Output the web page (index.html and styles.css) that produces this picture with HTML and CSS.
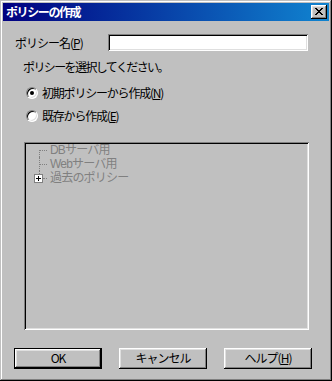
FILE: index.html
```html
<!DOCTYPE html>
<html lang="ja">
<head>
<meta charset="utf-8">
<link rel="stylesheet" href="styles.css">
</head>
<body>
<div class="window">
  <div class="titlebar">
    <span class="title">ポリシーの作成</span>
    <span class="close">
      <svg width="8" height="7" viewBox="0 0 8 7" shape-rendering="crispEdges">
        <path d="M0 0h2v1h-2zM6 0h2v1h-2zM1 1h2v1h-2zM5 1h2v1h-2zM2 2h4v1h-4zM3 3h2v1h-2zM2 4h4v1h-4zM1 5h2v1h-2zM5 5h2v1h-2zM0 6h2v1h-2zM6 6h2v1h-2z" fill="#000"/>
      </svg>
    </span>
  </div>
  <div class="content">
    <div class="name-row">
      <span class="label">ポリシー名(<u>P</u>)</span>
      <span class="input"></span>
    </div>
    <div class="prompt">ポリシーを選択してください。</div>
    <div class="radio-row first">
      <span class="radio checked"><span class="dot"></span></span>
      <span class="rlabel">初期ポリシーから作成(<u>N</u>)</span>
    </div>
    <div class="radio-row">
      <span class="radio"></span>
      <span class="rlabel">既存から作成(<u>E</u>)</span>
    </div>
    <div class="tree">
      <div class="node first">DBサーバ用</div>
      <div class="node">Webサーバ用</div>
      <div class="node last"><span class="plus"></span>過去のポリシー</div>
    </div>
    <div class="buttons">
      <span class="btn default"><span class="btn-face">OK</span></span>
      <span class="btn"><span class="btn-face">キャンセル</span></span>
      <span class="btn"><span class="btn-face">ヘルプ(<u>H</u>)</span></span>
    </div>
  </div>
</div>
</body>
</html>
```
FILE: styles.css
```css
html, body {
  margin: 0;
  padding: 0;
  background: #c0c0c0;
}
body {
  font-family: "Noto Sans CJK JP", "Liberation Sans", sans-serif;
  font-size: 12px;
  color: #000;
}
.window {
  width: 332px;
  height: 381px;
  box-sizing: border-box;
  padding: 3px;
  background: #c0c0c0;
  box-shadow: inset -1px -1px #000, inset 1px 1px #c0c0c0, inset -2px -2px #808080, inset 2px 2px #fff;
  display: flex;
  flex-direction: column;
}
.titlebar {
  height: 18px;
  background: linear-gradient(to right, #000080, #1084d0);
  display: flex;
  align-items: center;
  justify-content: space-between;
  padding: 0 2px 0 3px;
}
.title {
  color: #fff;
  font-weight: bold;
  font-size: 12px;
  line-height: 18px;
  letter-spacing: -1.4px;
}
.close {
  width: 16px;
  height: 14px;
  box-sizing: border-box;
  background: #c0c0c0;
  box-shadow: inset -1px -1px #000, inset 1px 1px #fff, inset -2px -2px #808080, inset 2px 2px #dfdfdf;
  display: flex;
  align-items: center;
  justify-content: center;
  padding: 0 1px 1px 0;
}
.close svg { display: block; }
.content {
  display: flex;
  flex-direction: column;
}
.name-row {
  margin-top: 13px;
  height: 17px;
  display: flex;
  align-items: center;
}
.label {
  flex: 0 0 105px;
  padding-left: 12px;
  box-sizing: border-box;
  letter-spacing: -1px;
  line-height: 16px;
}
.input {
  width: 200px;
  height: 17px;
  box-sizing: border-box;
  background: #fff;
  box-shadow: inset 1px 1px #808080, inset -1px -1px #fff, inset 2px 2px #000, inset -2px -2px #dfdfdf;
}
.prompt {
  margin-top: 8px;
  padding-left: 20px;
  line-height: 16px;
  height: 16px;
  letter-spacing: -1.6px;
}
.radio-row {
  display: flex;
  align-items: center;
  height: 16px;
  margin-top: 7px;
  padding-left: 23px;
}
.radio-row.first { margin-top: 10px; }
.radio {
  width: 12px;
  height: 12px;
  box-sizing: border-box;
  border-radius: 50%;
  border: 1px solid;
  border-color: #808080 #fff #fff #808080;
  background: #fff;
  box-shadow: inset 1px 1px #000, inset -1px -1px #dfdfdf;
  display: flex;
  align-items: center;
  justify-content: center;
  margin-right: 4px;
}
.dot {
  width: 4px;
  height: 4px;
  border-radius: 50%;
  background: #000;
}
.rlabel {
  line-height: 16px;
  letter-spacing: -1.2px;
}
.tree {
  margin: 18px 0 0 21px;
  width: 285px;
  height: 188px;
  box-sizing: border-box;
  padding: 0 2px 2px 2px;
  background: #c0c0c0;
  box-shadow: inset 1px 1px #808080, inset -1px -1px #fff, inset 2px 2px #000, inset -2px -2px #dfdfdf;
  color: #808080;
  font-family: "Liberation Sans", "Noto Sans CJK JP", sans-serif;
}
.node {
  position: relative;
  height: 14px;
  line-height: 14px;
  padding-left: 24px;
  letter-spacing: -0.8px;
  font-size: 12px;
}
.node.first { margin-top: 1px; }
.node::before {
  content: "";
  position: absolute;
  left: 13px;
  top: 7px;
  width: 8px;
  border-top: 1px dotted #808080;
}
.node::after {
  content: "";
  position: absolute;
  left: 13px;
  top: 0;
  height: 14px;
  border-left: 1px dotted #808080;
}
.node.first::after { top: 7px; height: 7px; }
.node.last::after { height: 3px; }
.node.last::before { left: 17px; width: 4px; }
.plus {
  position: absolute;
  left: 8px;
  top: 3px;
  width: 9px;
  height: 9px;
  box-sizing: border-box;
  border: 1px solid #808080;
  background: #fff;
}
.plus::before {
  content: "";
  position: absolute;
  left: 1px;
  top: 3px;
  width: 5px;
  height: 1px;
  background: #000;
}
.plus::after {
  content: "";
  position: absolute;
  left: 3px;
  top: 1px;
  width: 1px;
  height: 5px;
  background: #000;
}
.buttons {
  display: flex;
  gap: 17px;
  margin: 18px 0 0 11px;
}
.btn {
  width: 88px;
  height: 21px;
  box-sizing: border-box;
  display: flex;
}
.btn.default {
  border: 1px solid #000;
}
.btn-face {
  flex: 1;
  display: flex;
  align-items: center;
  justify-content: center;
  background: #c0c0c0;
  box-shadow: inset -1px -1px #000, inset 1px 1px #fff, inset -2px -2px #808080, inset 2px 2px #dfdfdf;
  letter-spacing: -1px;
  line-height: 16px;
  padding-bottom: 1px;
}
u { text-decoration: underline; text-underline-offset: 1px; }
```
